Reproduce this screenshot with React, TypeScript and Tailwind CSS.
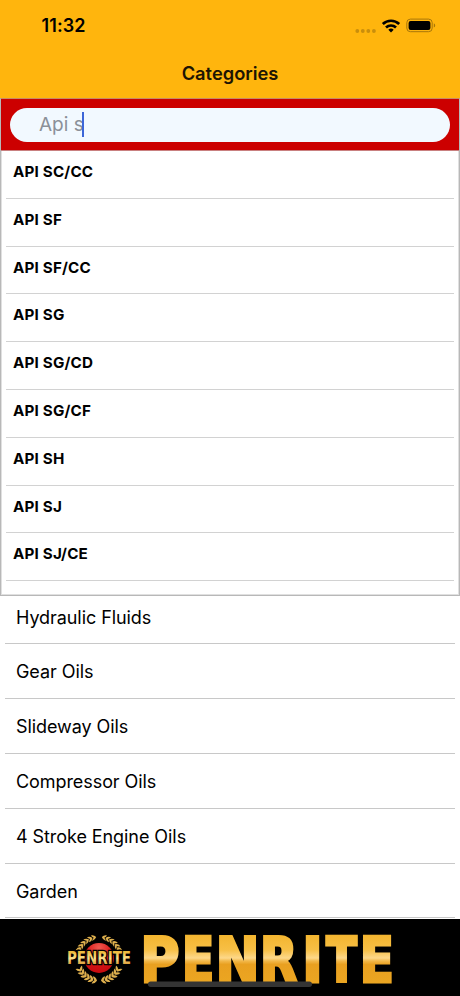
import { useState } from "react";

interface Row {
  id: number;
  name: string;
}

const suggestions: Row[] = [
  { id: 1, name: "API SC/CC" },
  { id: 2, name: "API SF" },
  { id: 3, name: "API SF/CC" },
  { id: 4, name: "API SG" },
  { id: 5, name: "API SG/CD" },
  { id: 6, name: "API SG/CF" },
  { id: 7, name: "API SH" },
  { id: 8, name: "API SJ" },
  { id: 9, name: "API SJ/CE" },
];

const categories: Row[] = [
  { id: 1, name: "Hydraulic Fluids" },
  { id: 2, name: "Gear Oils" },
  { id: 3, name: "Slideway Oils" },
  { id: 4, name: "Compressor Oils" },
  { id: 5, name: "4 Stroke Engine Oils" },
  { id: 6, name: "Garden" },
];

// Wordmark letters with their own set widths
const wordmark = [
  { char: "P", x: 140.5, width: 38.8 },
  { char: "E", x: 181.9, width: 32.2 },
  { char: "N", x: 215.7, width: 43.6 },
  { char: "R", x: 260, width: 37.5 },
  { char: "I", x: 302.2, width: 20.5 },
  { char: "T", x: 326.3, width: 30.6 },
  { char: "E", x: 359.8, width: 34.2 },
];

// Leaves run up the left side, mirrored for the right
const lowerLeaves = [101, 111, 121, 131, 141, 151];
const upperLeaves = [207, 217, 227, 237, 247, 257];

function StatusIcons() {
  return (
    <svg width="84" height="20" viewBox="0 0 84 20" aria-hidden="true">
      <g fill="#c98e0c">
        <circle cx="4.3" cy="15" r="1.9" />
        <circle cx="9.8" cy="15" r="1.9" />
        <circle cx="15.3" cy="15" r="1.9" />
        <circle cx="20.9" cy="15" r="1.9" />
      </g>
      <g fill="none" stroke="#000" strokeWidth="2.7">
        <path d="M29.8 8a12 12 0 0 1 16.4 0" />
        <path d="M33 11.5a7.3 7.3 0 0 1 10 0" />
      </g>
      <path d="M38 16.6l-2.7-2.8a4 4 0 0 1 5.4 0z" fill="#000" />
      <rect x="53.8" y="3.1" width="25.4" height="12.6" rx="3.6" fill="none" stroke="#a8760a" />
      <rect x="55.6" y="4.9" width="21.8" height="9" rx="2" fill="#000" />
      <path d="M80.8 7.3c1.9.9 1.9 3.4 0 4.3z" fill="#a8760a" />
    </svg>
  );
}

function WreathLeaves() {
  return (
    <>
      {lowerLeaves.map((a) => (
        <path key={a} transform={`rotate(${a}) translate(21.8 0)`} d="M-3.6 2.6Q-3.6-.6 0-2.2Q3.6-.6 3.6 2.6Q1.4 2.2 0 .4Q-1.4 2.2-3.6 2.6z" />
      ))}
      {upperLeaves.map((a) => (
        <path key={a} transform={`rotate(${a}) translate(22 0)`} d="M-2.8-2.6Q-2.8.6 0 2.2Q2.8.6 2.8-2.6Q1.1-2 0-.4Q-1.1-2-2.8-2.6z" transform-origin="0 0" />
      ))}
    </>
  );
}

function BrandBanner() {
  return (
    <svg className="block overflow-visible" width="460" height="77" viewBox="0 0 460 77" role="img" aria-label="Penrite">
      <defs>
        <linearGradient id="gold" gradientUnits="userSpaceOnUse" x1="0" y1="16" x2="0" y2="65">
          <stop offset="0" stopColor="#f3b52f" />
          <stop offset="0.3" stopColor="#f7bf45" />
          <stop offset="0.47" stopColor="#fdd88a" />
          <stop offset="0.53" stopColor="#f2b84a" />
          <stop offset="0.6" stopColor="#e9a020" />
          <stop offset="1" stopColor="#eba622" />
        </linearGradient>
        <linearGradient id="goldSmall" gradientUnits="userSpaceOnUse" x1="0" y1="33" x2="0" y2="46">
          <stop offset="0" stopColor="#eebb3c" />
          <stop offset="0.5" stopColor="#fbdf8c" />
          <stop offset="1" stopColor="#d8932a" />
        </linearGradient>
        <radialGradient id="ball" cx="0.5" cy="0.15" r="0.8">
          <stop offset="0" stopColor="#ee5a50" />
          <stop offset="0.5" stopColor="#d91a1a" />
          <stop offset="1" stopColor="#c80c10" />
        </radialGradient>
      </defs>

      {/* Emblem */}
      <g fill="#deb04e">
        <g transform="translate(99 40)"><WreathLeaves /></g>
        <g transform="translate(99 40) scale(-1 1)"><WreathLeaves /></g>
      </g>
      <circle cx="99" cy="39" r="15" fill="url(#ball)" />
      <text x="67" y="45.4" textLength="64" lengthAdjust="spacingAndGlyphs" fontSize="17" stroke="#000" strokeWidth="2.6" paintOrder="stroke" fill="url(#goldSmall)" className="font-['DejaVu_Sans_Condensed','DejaVu_Sans',sans-serif] font-bold">
        PENRITE
      </text>

      {/* Wordmark */}
      <text
        y="62.7"
        fontSize="61.4"
        stroke="url(#gold)"
        strokeWidth="3"
        fill="url(#gold)"
        className="font-['DejaVu_Sans_Condensed','DejaVu_Sans',sans-serif] font-bold"
      >
        {wordmark.map((l) => (
          <tspan key={l.x} x={l.x} textLength={l.width} lengthAdjust="spacingAndGlyphs">{l.char}</tspan>
        ))}
      </text>

      {/* Home indicator */}
      <rect x="148" y="62.6" width="164" height="5.4" rx="2.7" fill="#343434" />
    </svg>
  );
}

export default function App() {
  const [query, setQuery] = useState("Api s");

  return (
    <div className="flex h-[996px] w-[460px] flex-col overflow-hidden bg-white font-['Inter',sans-serif] text-black">
      <header className="h-[98px] shrink-0 bg-[#ffb50d]">
        <div className="flex h-[51px] items-center justify-between pr-[23px] pl-[41.5px]">
          <span className="text-[18px] font-semibold tracking-[0.1px]">11:32</span>
          <StatusIcons />
        </div>
        <h1 className="pt-[9px] text-center text-[18.3px] leading-[26px] font-semibold text-[#1c1403]">Categories</h1>
      </header>

      {/* Search field with its suggestions */}
      <section className="flex h-[498px] shrink-0 flex-col overflow-hidden border border-[#b8b8b8] border-t-[#c98a62] shadow-[inset_0_0_0_1px_#e0e0e0]">
        <div className="h-[52px] shrink-0 border-b border-[#c98080] bg-[#cc0000] px-[9px] pt-[9px]">
          <label className="flex h-[34px] items-center rounded-full bg-[#f2f9ff] pl-[29px]">
            <span className="relative">
              <input
                value={query}
                onChange={(e) => setQuery(e.target.value)}
                className="block w-[380px] bg-transparent pt-px text-[19px] text-[#8b9098] outline-none"
                aria-label="Search"
              />
              <span className="absolute top-[2px] left-[43px] h-[25px] w-[2px] bg-[#3c66d8]" />
            </span>
          </label>
        </div>
        <ul className="px-[5px]">
          {suggestions.map((s) => (
            <li key={s.id} className="flex h-[47.8px] items-center border-b border-[#d2d2d2] pb-[4px] pl-[7px] text-[15.2px] font-bold tracking-[0.18px]">
              {s.name}
            </li>
          ))}
        </ul>
      </section>

      <ul className="grow overflow-hidden px-[5px]">
        {categories.map((c) => (
          <li key={c.id} className="flex h-[54.9px] items-center border-b border-[#c8c8c8] pt-[2px] pl-[11px] text-[18px] tracking-[-0.07px] first:h-[48px] first:pt-0 first:pb-[4px]">
            {c.name}
          </li>
        ))}
      </ul>

      <footer className="h-[77px] shrink-0 bg-black">
        <BrandBanner />
      </footer>
    </div>
  );
}
